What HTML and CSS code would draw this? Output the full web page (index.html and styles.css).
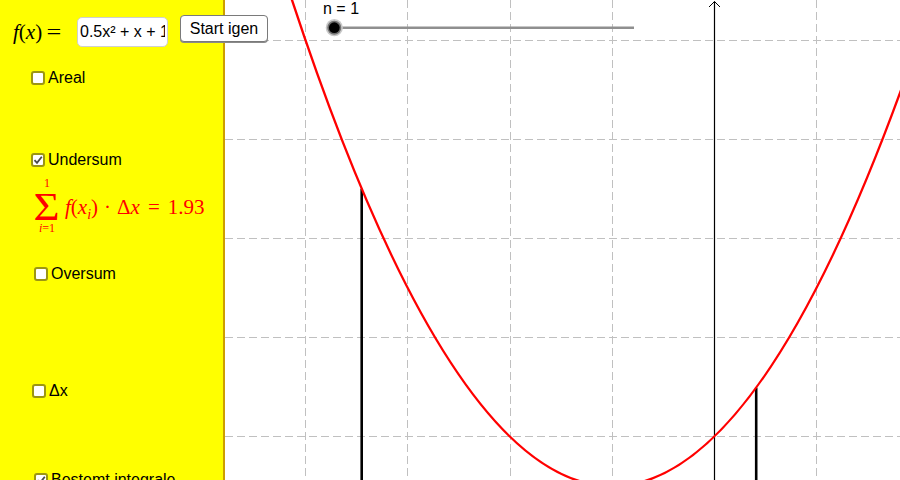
FILE: index.html
```html
<!DOCTYPE html>
<html>
<head>
<meta charset="utf-8">
<link rel="stylesheet" href="styles.css">
</head>
<body>
<div class="app">
  <div class="panel">
    <div class="top-row">
      <span class="math fx"><i>f</i>(<i>x</i>)<span class="eq">=</span></span>
      <input class="fn-input" type="text" value="0.5x² + x + 1">
      <button class="btn">Start igen</button>
    </div>
    <label class="row row-areal"><span class="cb"></span><span class="lbl">Areal</span></label>
    <label class="row row-under"><span class="cb checked"><svg viewBox="0 0 10 10" width="10" height="10"><polyline points="1.5,5.2 4,7.8 8.8,1.8" fill="none" stroke="#4a4a4a" stroke-width="1.8"/></svg></span><span class="lbl">Undersum</span></label>
    <div class="sum math">
      <div class="sum-op">
        <span class="lim-top">1</span>
        <span class="sigma">Σ</span>
        <span class="lim-bot"><i>i</i>=1</span>
      </div>
      <div class="expr"><i>f</i>(<i>x</i><sub><i>i</i></sub>)<span class="dot">·</span>Δ<i>x</i><span class="eq2">=</span>1.93</div>
    </div>
    <label class="row row-over"><span class="cb"></span><span class="lbl">Oversum</span></label>
    <label class="row row-dx"><span class="cb"></span><span class="lbl">Δx</span></label>
    <label class="row row-int"><span class="cb checked"><svg viewBox="0 0 10 10" width="10" height="10"><polyline points="1.5,5.2 4,7.8 8.8,1.8" fill="none" stroke="#4a4a4a" stroke-width="1.8"/></svg></span><span class="lbl">Bestemt integrale</span></label>
  </div>
  <div class="graph">
    <svg class="plot" width="675" height="480" viewBox="225 0 675 480">
      <g stroke="#c0c0c0" stroke-width="1" stroke-dasharray="8 4" fill="none">
        <line x1="225" y1="40.5" x2="900" y2="40.5"/>
        <line x1="225" y1="139.5" x2="900" y2="139.5"/>
        <line x1="225" y1="238.5" x2="900" y2="238.5"/>
        <line x1="225" y1="337.5" x2="900" y2="337.5"/>
        <line x1="225" y1="436.5" x2="900" y2="436.5"/>
        <line x1="305.5" y1="0" x2="305.5" y2="480"/>
        <line x1="407.5" y1="0" x2="407.5" y2="480"/>
        <line x1="510.5" y1="0" x2="510.5" y2="480"/>
        <line x1="612.5" y1="0" x2="612.5" y2="480"/>
        <line x1="816.5" y1="0" x2="816.5" y2="480"/>
      </g>
      <line x1="714.5" y1="1.5" x2="714.5" y2="480" stroke="#000" stroke-width="1.2"/>
      <polyline points="709,7 714.5,1.5 720,7" fill="none" stroke="#000" stroke-width="1"/>
      <line x1="361.7" y1="188.8" x2="361.7" y2="482" stroke="#000" stroke-width="2.6"/>
      <line x1="756.2" y1="387.6" x2="756.2" y2="482" stroke="#000" stroke-width="2.6"/>
      <path d="M203.3,-306.65 Q612.1,1278.95 1020.9,-306.65" fill="none" stroke="#ff0000" stroke-width="2.4"/>
      <text x="323" y="13.5" class="slider-label">n = 1</text>
      <line x1="335" y1="27.7" x2="634" y2="27.7" stroke="#8f8f8f" stroke-width="2.5"/>
      <circle cx="334.3" cy="27.7" r="8.6" fill="#c8c8c8"/>
      <circle cx="334.3" cy="27.7" r="7" fill="#707070"/>
      <circle cx="334.3" cy="27.7" r="5.4" fill="#000"/>
    </svg>
  </div>
</div>
</body>
</html>
```
FILE: styles.css
```css
html, body {
  margin: 0;
  padding: 0;
  background: #fff;
}
body {
  font-family: "Liberation Sans", Arial, sans-serif;
  font-size: 16px;
  color: #000;
}
.app {
  display: flex;
  width: 900px;
  height: 480px;
  overflow: hidden;
}
.panel {
  position: relative;
  z-index: 1;
  flex: none;
  width: 223px;
  height: 480px;
  background: #ffff00;
  border-right: 2px solid #cc9f00;
  display: flex;
  flex-direction: column;
  padding-top: 15px;
  box-sizing: content-box;
}
.top-row {
  display: flex;
  align-items: flex-start;
  height: 32px;
  padding-left: 13px;
  white-space: nowrap;
}
.top-row > * {
  flex: none;
}
.math {
  font-family: "Liberation Serif", "Times New Roman", serif;
}
.fx {
  width: 64px;
  margin-top: 2px;
  font-size: 21px;
  line-height: 30px;
}
.fx .eq {
  display: inline-block;
  margin-left: 6px;
  transform: scaleX(1.25);
}
.fn-input {
  width: 91px;
  height: 30px;
  margin: 2px 12px 0 0;
  padding: 0 2px;
  box-sizing: border-box;
  border: 1px solid #cfcfcf;
  border-radius: 5px;
  background: #fff;
  font-family: "Liberation Sans", Arial, sans-serif;
  font-size: 16px;
  color: #000;
  outline: none;
}
.btn {
  width: 88px;
  height: 27px;
  padding: 0;
  box-sizing: border-box;
  border: 1px solid #7a7a7a;
  border-radius: 4px;
  background: #fff;
  box-shadow: 0 1px 0 #8a8a8a;
  font-family: "Liberation Sans", Arial, sans-serif;
  font-size: 16px;
  color: #000;
}
.row {
  display: flex;
  align-items: center;
  height: 18px;
  line-height: 18px;
  white-space: nowrap;
}
.cb {
  flex: none;
  width: 14px;
  height: 14px;
  box-sizing: border-box;
  border: 2px solid #9c9612;
  border-radius: 3px;
  background: #fff;
  margin-right: 3px;
  display: flex;
  align-items: center;
  justify-content: center;
}
.cb svg {
  display: block;
}
.row-areal { margin-top: 22px; padding-left: 31px; }
.row-under { margin-top: 64px; padding-left: 31px; }
.row-over  { margin-top: 30px; padding-left: 34px; }
.row-dx    { margin-top: 99px; padding-left: 32px; }
.row-int   { margin-top: 71px; padding-left: 34px; }

.sum {
  display: flex;
  align-items: center;
  height: 60px;
  margin-top: 6px;
  padding-left: 33px;
  color: #ff0000;
}
.sum-op {
  display: flex;
  flex-direction: column;
  align-items: center;
  width: 28px;
}
.lim-top, .lim-bot {
  font-size: 12px;
  line-height: 13px;
}
.lim-top {
  margin-top: 2px;
}
.sigma {
  font-size: 40px;
  line-height: 34px;
  height: 32px;
  overflow: visible;
  transform: scaleX(1.12);
}
.expr {
  margin-left: 4px;
  margin-top: 4px;
  font-size: 21px;
  white-space: nowrap;
}
.expr sub {
  font-size: 14px;
  line-height: 0;
}
.expr .dot {
  margin: 0 6px;
}
.expr .eq2 {
  margin: 0 8px;
}
.graph {
  flex: 1;
  height: 480px;
  background: #fff;
}
.plot {
  display: block;
}
.slider-label {
  font-family: "Liberation Sans", Arial, sans-serif;
  font-size: 16px;
  fill: #000;
}
```
